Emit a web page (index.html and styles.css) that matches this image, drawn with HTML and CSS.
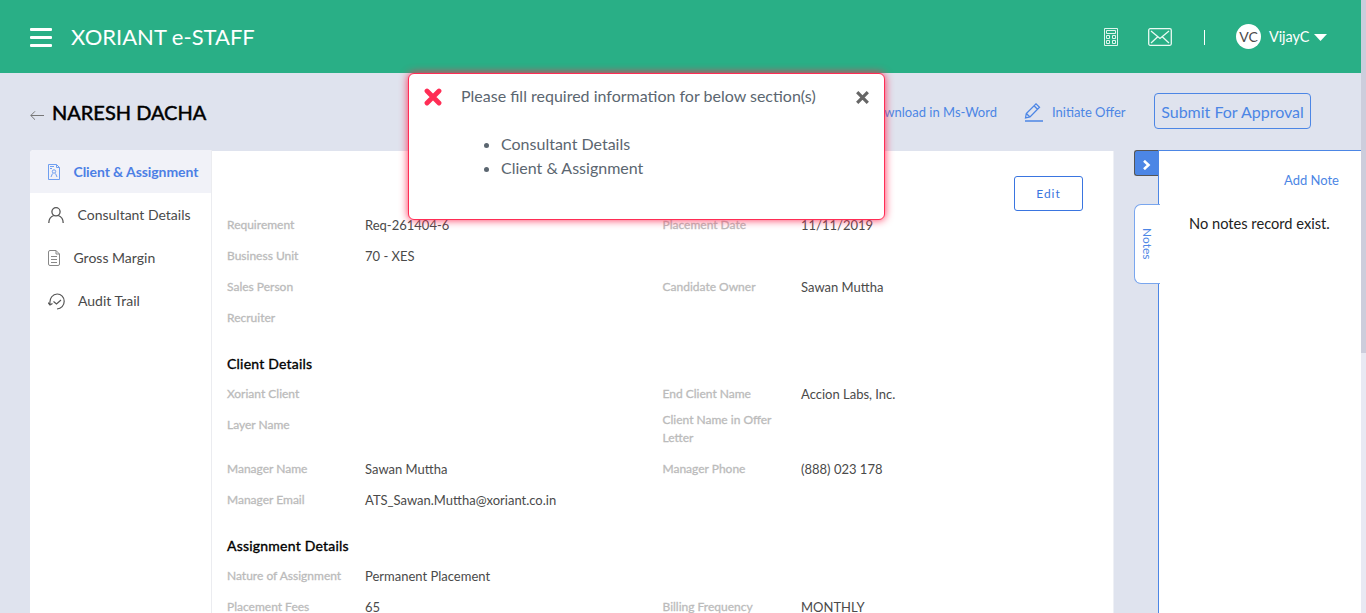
FILE: index.html
```html
<!DOCTYPE html>
<html lang="en">
<head>
<meta charset="utf-8">
<title>Xoriant e-Staff</title>
<link rel="stylesheet" href="styles.css">
</head>
<body>
<div class="app">
  <div class="view">
    <header class="topbar">
      <div class="burger"><i></i><i></i><i></i></div>
      <div class="brand">XORIANT e-STAFF</div>
      <svg class="calc" width="14" height="18" viewBox="0 0 14 18" fill="none" stroke="#dff5ec"><path d="M.5.5h13v17H.5zM2.500 2.500h9v3h-9zM2.500 7.500h3v3h-3zM8.500 7.500h3v3h-3zM2.500 12.500h3v3h-3zM8.500 12.500h3v3h-3z"/></svg>
      <svg class="mail" width="24" height="18" viewBox="0 0 24 18" fill="none" stroke="#eafaf3" stroke-width="1.300"><rect x=".7" y=".7" width="22.600" height="16.600" rx="1.500"/><path d="M3 3l9 7.500L21 3M3 15l6.500-6M21 15l-6.500-6"/></svg>
      <div class="bar"></div>
      <div class="avatar">VC</div>
      <div class="user">VijayC</div>
      <svg class="caret" width="13" height="7" viewBox="0 0 13 7"><path d="M0 0h13L6.500 7z" fill="#fff"/></svg>
    </header>
    <div class="titlebar">
      <svg class="back" width="14" height="10" viewBox="0 0 14 10" fill="none" stroke="#777"><path d="M14 5.500H.8M5 1.300L.8 5.500 5 9.700"/></svg>
      <h1 class="name">NARESH DACHA</h1>
      <a class="link download">Download in Ms-Word</a>
      <svg class="pencil" width="20" height="19" viewBox="0 0 20 19" fill="none" stroke="#4c86e5" stroke-width="1.300"><path d="M1.500 15l.8-4.500L12 .9l3.500 3.400L6 14zM10 2.800l3.500 3.500M2.300 10.500L6 14"/><path d="M1 18h18" stroke-width="1.500"/></svg>
      <a class="link offer">Initiate Offer</a>
      <button class="submit">Submit For Approval</button>
    </div>
    <div class="body">
      <div class="panel">
        <nav class="side">
          <a class="item active"><svg width="12" height="16" viewBox="0 0 12 16" fill="none" stroke="#6f9ff0"><path d="M.5.5h8l3 3v12H.5zM8.500.5v3h3M2 2.500h4M2 4.500h2"/><circle cx="6" cy="7.500" r="1.700"/><path d="M3 13l1.500-3.500M9 13L7.500 9.500"/></svg><span class="t1">Client &amp; Assignment</span></a>
          <a class="item"><svg width="16" height="16" viewBox="0 0 16 16" fill="none" stroke="#555" stroke-width="1.300"><circle cx="8" cy="4.800" r="4.100"/><path d="M.8 16c0-4 2-6.500 5-7.500M15.200 16c0-4-2-6.500-5-7.500"/></svg><span class="t2">Consultant Details</span></a>
          <a class="item"><svg width="12" height="16" viewBox="0 0 12 16" fill="none" stroke="#888"><path d="M2 .5h6l3.500 3.500v10q0 1.500-1.500 1.500H2Q.5 15.500.5 14V2Q.5.500 2 .5M8 .5V4h3.500M3 6.500h6M3 9.500h6M3 12.500h6"/></svg><span class="t3">Gross Margin</span></a>
          <a class="item"><svg width="17" height="17" viewBox="0 0 17 17" fill="none" stroke="#555" stroke-width="1.200"><path d="M2 11C1.200 5 5 1 9.200 1c4 0 7 3.200 7 7.200 0 4.300-3 7.500-7.200 7.800M0 9.500L2 12l2.500-1.500M5.500 8.500L8.500 11l4.500-4"/></svg><span class="t4">Audit Trail</span></a>
        </nav>
        <main class="main">
          <div class="tools"><button class="edit">Edit</button></div>
          <div class="row"><label>Requirement</label><span>Req-261404-6</span><label>Placement Date</label><span>11/11/2019</span></div>
          <div class="row"><label>Business Unit</label><span>70 - XES</span></div>
          <div class="row"><label>Sales Person</label><span></span><label>Candidate Owner</label><span>Sawan Muttha</span></div>
          <div class="row"><label>Recruiter</label></div>
          <h2>Client Details</h2>
          <div class="row"><label>Xoriant Client</label><span></span><label>End Client Name</label><span>Accion Labs, Inc.</span></div>
          <div class="row tall"><label>Layer Name</label><span></span><label class="two">Client Name in Offer<br>Letter</label></div>
          <div class="row"><label>Manager Name</label><span>Sawan Muttha</span><label>Manager Phone</label><span>(888) 023 178</span></div>
          <div class="row"><label>Manager Email</label><span>ATS_Sawan.Muttha@xoriant.co.in</span></div>
          <h2>Assignment Details</h2>
          <div class="row"><label>Nature of Assignment</label><span>Permanent Placement</span></div>
          <div class="row"><label>Placement Fees</label><span>65</span><label>Billing Frequency</label><span>MONTHLY</span></div>
        </main>
      </div>
      <div class="tabs">
        <div class="toggle"><svg width="8" height="10" viewBox="0 0 8 10" fill="none" stroke="#fff" stroke-width="2.600"><path d="M1 .8L5.500 5 1 9.200"/></svg></div>
        <div class="tab"><span>Notes</span></div>
      </div>
      <aside class="notes">
        <a class="link add">Add Note</a>
        <p>No notes record exist.</p>
      </aside>
    </div>
  </div>
  <div class="scroll"><div class="thumb"></div></div>
  <div class="alert">
    <svg class="err" width="18" height="18" viewBox="0 0 18 18" stroke="#ff2d55" stroke-width="4.800" stroke-linecap="round"><path d="M3 3l12 12M15 3L3 15"/></svg>
    <div class="msg"><p>Please fill required information for below section(s)</p>
      <ul><li>Consultant Details</li><li>Client &amp; Assignment</li></ul></div>
    <svg class="close" width="13" height="13" viewBox="0 0 13 13" stroke="#666" stroke-width="3.200"><path d="M1.200 1.200l10.600 10.600M11.800 1.200L1.200 11.800"/></svg>
  </div>
</div>
</body>
</html>
```
FILE: styles.css
```css
* { box-sizing: border-box; }
body { margin: 0; font-family: Lato, "Open Sans", sans-serif; color: #4a4a4a; }
p, h1, h2, ul { margin: 0; padding: 0; font-weight: 400; }
svg { flex: none; display: block; }
button { font-family: inherit; background: none; padding: 0; }
.app { position: relative; display: flex; width: 1366px; height: 613px; overflow: hidden; background: #dfe3ee; }
.view { width: 1361px; }
.topbar { height: 73px; background: #29af86; display: flex; align-items: center; padding-left: 30px; color: #fff; }
.burger { display: grid; gap: 5px; width: 22px; margin-top: 2px; }
.burger i { height: 3px; background: #fff; border-radius: 1px; }
.brand { font-size: 22px; margin-left: 19px; width: 1033px; white-space: nowrap; }
.mail { margin-left: 30px; }
.bar { width: 1px; height: 15px; margin: 2px 31px 0 32px; background: #fff; }
.avatar { width: 25px; height: 25px; border-radius: 50%; background: #fff; color: #4a4a4a; font-size: 14px; line-height: 25px; text-align: center; }
.user { font-size: 14.500px; margin-left: 8px; width: 38px; white-space: nowrap; letter-spacing: -.1px; }
.caret { margin-left: 7px; margin-top: 2px; }
.titlebar { height: 77px; display: flex; align-items: center; padding: 0 0 0 30px; }
.back { margin-top: 6px; }
.name { font-size: 20px; color: #000; -webkit-text-stroke: .5px #000; margin: 1px 0 0 8px; width: 813px; white-space: nowrap; }
.link { color: #4c86e5; font-size: 13px; white-space: nowrap; }
.download { width: 132px; display: flex; justify-content: flex-end; }
.pencil { margin: 2px 8px 0 27px; }
.offer { width: 74px; }
.submit { width: 157px; height: 36px; border: 1px solid #4c86e5; border-radius: 4px; color: #4c86e5; font-size: 16px; margin: -1px 0 0 28px; white-space: nowrap; }
.body { display: flex; height: 463px; padding-left: 30px; }
.panel { display: flex; width: 1084px; }
.side { width: 182px; background: #fff; border-right: 1px solid #ebecf0; border-radius: 4px 0 0; }
.item { height: 43px; display: flex; align-items: center; padding: 1px 0 0 18px; font-size: 14px; color: #4a4a4a; white-space: nowrap; }
.item span { margin: -2px 0 0 13.500px; }
.active { background: #f1f2f8; color: #4c7fe5; border-radius: 4px 0 0; font-weight: 700; letter-spacing: -.08px; }
.item .t4 { margin-left: 13px; }
.main { width: 902px; background: #fff; margin-top: 1px; padding-left: 15px; border-right: 1px solid #eef0f5; }
.tools { height: 59px; padding: 25px 30px 0 0; display: flex; justify-content: flex-end; }
.edit { width: 69px; height: 35px; border: 1px solid #3a75e0; border-radius: 3px; color: #3a75e0; font-size: 12px; letter-spacing: 1px; }
.row { height: 31px; display: grid; grid-template-columns: 138px 297.5px 138.500px 1fr; line-height: 31px; font-size: 13px; white-space: nowrap; }
.row label { font-size: 12px; line-height: 29px; color: #bbb; -webkit-text-stroke: .3px #bbb; }
.row .two { line-height: 18px; padding-top: 1px; }
.tall { height: 44px; }
h2 { font-size: 14px; letter-spacing: .22px; color: #000; -webkit-text-stroke: .35px #000; height: 45px; line-height: 17px; padding-top: 21px; }
.tabs { width: 45px; padding-left: 20px; }
.toggle { width: 25px; height: 26px; background: #4c86e5; border: 1px solid #555; border-right: 0; border-radius: 3px 0 0 3px; display: flex; align-items: center; padding: 4px 0 0 8px; }
.tab { position: relative; z-index: 1; width: 26px; height: 80px; margin-top: 28px; background: #fff; border: 1px solid #79a6ee; border-right: 0; border-radius: 7px 0 0 7px; display: flex; align-items: center; justify-content: center; }
.tab span { writing-mode: vertical-rl; font-size: 12px; color: #4c86e5; }
.notes { width: 203px; margin-left: -1px; background: #fff; border-left: 1px solid #4c86e5; border-top: 1px solid #4c86e5; padding-left: 30px; }
.add { display: block; width: 150px; text-align: right; margin-top: 20px; line-height: 18px; }
.notes p { margin-top: 25px; line-height: 20px; font-size: 14.650px; color: #222; white-space: nowrap; }
.scroll { width: 5px; background: #e8e9f3; }
.thumb { height: 353px; background: #cccddc; }
.alert { position: absolute; left: 408px; top: 73px; width: 477px; height: 147px; background: #fff; border: 1px solid #ff2d55; border-radius: 6px; box-shadow: 0 0 8px #ff2d55; display: flex; padding: 10px 0 0 15px; color: #5b6670; font-size: 16px; line-height: 24px; }
.err { margin-top: 4px; }
.msg { margin-left: 19px; width: 395px; white-space: nowrap; }
.msg ul { margin-top: 24px; padding-left: 40px; }
.close { margin-top: 7px; }
```
